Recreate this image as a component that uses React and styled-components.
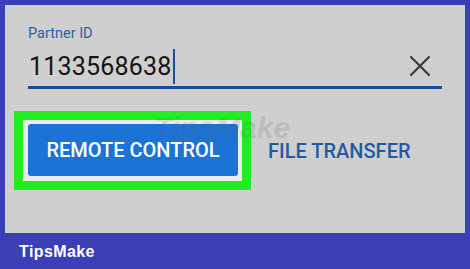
import React, { useState } from "react";
import styled, { createGlobalStyle } from "styled-components";

const GlobalStyle = createGlobalStyle`
  html, body {
    margin: 0;
    padding: 0;
    background: #3a3fb7;
  }
  * {
    box-sizing: border-box;
  }
`;

const App = () => {
  const [partnerId, setPartnerId] = useState("1133568638");

  return (
    <>
      <GlobalStyle />
      <Frame>
        <Panel>
          <Label>Partner ID</Label>
          <Field>
            <Value>
              {partnerId}
              <Caret />
            </Value>
            <ClearButton onClick={() => setPartnerId("")} aria-label="clear">
              <svg width="22" height="22" viewBox="0 0 22 22">
                <path
                  d="M2 2 L20 20 M20 2 L2 20"
                  stroke="#3a3a3a"
                  strokeWidth="2.2"
                  strokeLinecap="round"
                />
              </svg>
            </ClearButton>
          </Field>
          <Actions>
            <Highlight>
              <PrimaryButton>REMOTE CONTROL</PrimaryButton>
            </Highlight>
            <TextButton>FILE TRANSFER</TextButton>
          </Actions>
          <Watermark>TipsMake</Watermark>
        </Panel>
        <Footer>
          <Logo>TipsMake</Logo>
        </Footer>
      </Frame>
    </>
  );
};

const Frame = styled.div`
  width: 470px;
  height: 269px;
  background: #3a3fb7;
  display: flex;
  flex-direction: column;
  padding: 5px 5px 0 5px;
`;

const Panel = styled.div`
  position: relative;
  height: 228px;
  background: #cfcfcf;
  padding: 19px 0 0 23px;
  font-family: Roboto, "Liberation Sans", sans-serif;
`;

const Label = styled.div`
  font-size: 14.5px;
  line-height: 18px;
  color: #2d5ea6;
  padding-top: 1px;
`;

const Field = styled.div`
  width: 414px;
  height: 46px;
  display: flex;
  align-items: center;
  justify-content: space-between;
  border-bottom: 3px solid #1d4a94;
  padding-right: 11px;
`;

const Value = styled.div`
  display: flex;
  align-items: center;
  font-size: 25px;
  color: #141414;
  letter-spacing: 0.2px;
  padding-left: 1px;
  padding-top: 4px;
`;

const Caret = styled.span`
  display: inline-block;
  width: 2px;
  height: 35px;
  margin-left: 1px;
  background: #1c4c9c;
`;

const ClearButton = styled.button`
  border: none;
  background: transparent;
  padding: 0;
  display: flex;
  cursor: pointer;
  margin-top: 2px;
`;

const Actions = styled.div`
  display: flex;
  align-items: center;
  margin: 22px 0 0 -14px;
`;

const Highlight = styled.div`
  border: 9px solid #22ec22;
  background: #ececec;
  padding: 4px 4px 5px 5px;
`;

const PrimaryButton = styled.button`
  width: 210px;
  height: 52px;
  border: none;
  border-radius: 3px;
  background: #1b73d5;
  color: #ffffff;
  font-family: Roboto, "Liberation Sans", sans-serif;
  font-weight: 500;
  font-size: 20px;
  padding: 0;
  cursor: pointer;
`;

const TextButton = styled.button`
  border: none;
  background: transparent;
  color: #1f5ba3;
  font-family: Roboto, "Liberation Sans", sans-serif;
  font-weight: 500;
  font-size: 20px;
  padding: 0;
  margin-left: 17px;
  cursor: pointer;
`;

const Watermark = styled.div`
  position: absolute;
  left: 149px;
  top: 108px;
  font-family: "Liberation Sans", Arial, sans-serif;
  font-weight: 700;
  font-style: italic;
  font-size: 30px;
  line-height: 1;
  color: rgba(90, 90, 110, 0.18);
  pointer-events: none;
`;

const Footer = styled.div`
  flex: 1;
  display: flex;
  align-items: center;
  padding-left: 14px;
  padding-top: 2px;
`;

const Logo = styled.div`
  font-family: "Liberation Sans", Arial, sans-serif;
  font-weight: 700;
  font-size: 16px;
  color: #ffffff;
  letter-spacing: 0.4px;
`;

export default App;
